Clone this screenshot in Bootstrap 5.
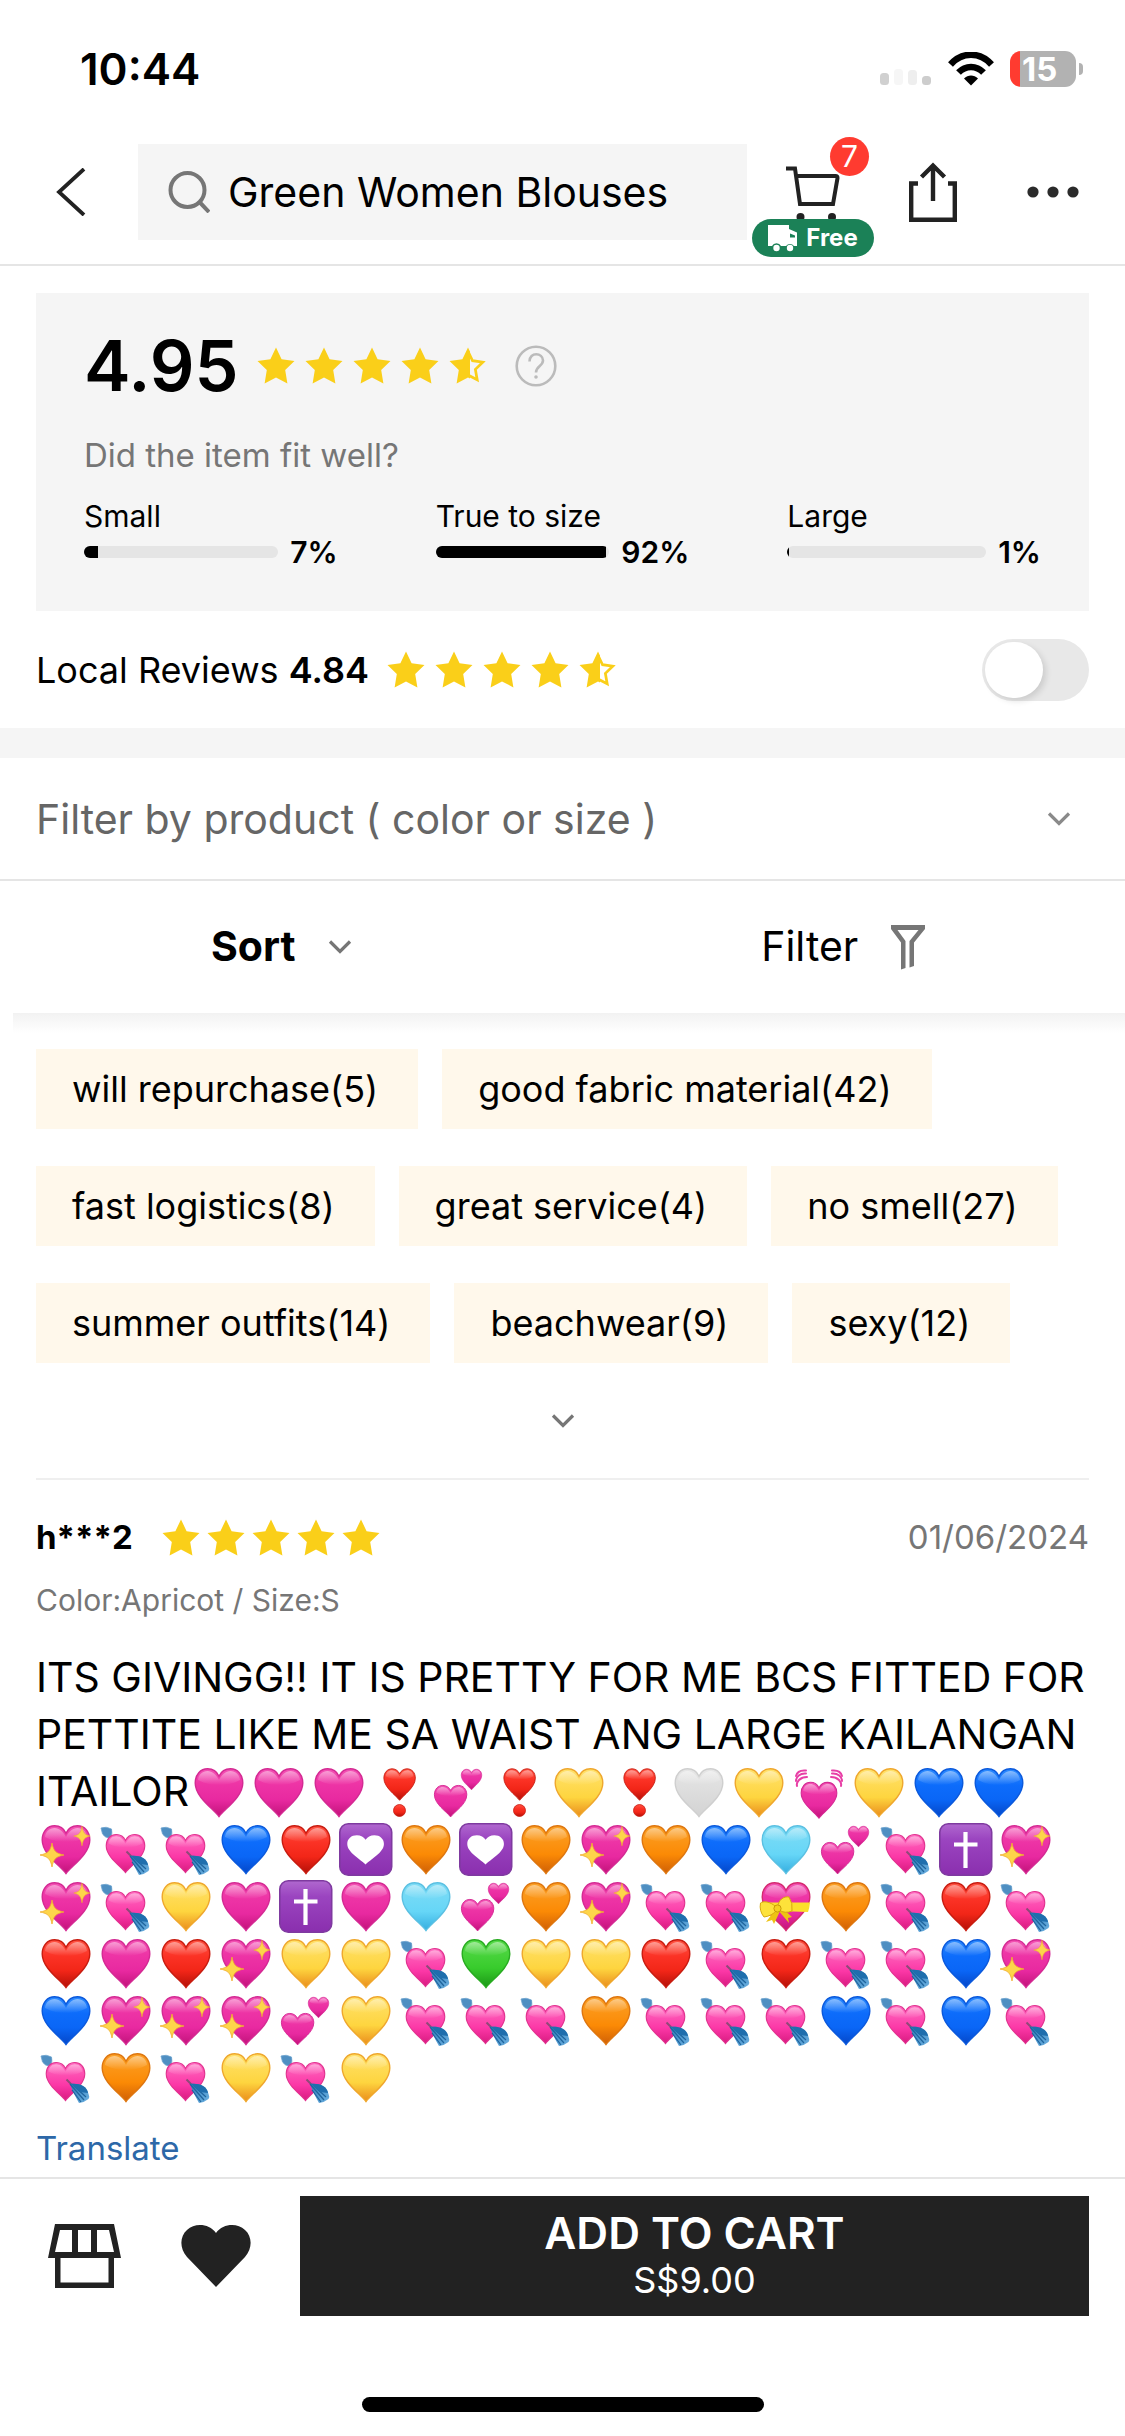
<!DOCTYPE html>
<html lang="en">
<head>
<meta charset="utf-8">
<meta name="viewport" content="width=device-width, initial-scale=1">
<title>Green Women Blouses – Reviews</title>
<link rel="stylesheet" href="https://cdn.jsdelivr.net/npm/bootstrap@5.3.0/dist/css/bootstrap.min.css">
<style>
  body { font-family: Inter, "Liberation Sans", sans-serif; color: #000; background: #fff; font-size: 36px; }
  svg { display: block; flex: none; }
  button { font-family: inherit; color: inherit; }
  .plain { border: 0; background: none; padding: 0; }
  .edge { padding-left: 36px; padding-right: 36px; }

  .status { padding: 45px 42px 27px 80px; }
  .clock { font-size: 44px; line-height: 48px; font-weight: 600; }
  .battery { width: 66px; height: 36px; border-radius: 11px; background: linear-gradient(90deg, #ff3b30 10px, #b2b2b2 10px); color: #fff; font-size: 33px; line-height: 36px; font-weight: 700; padding-left: 12px; }
  .battery-tip { width: 4px; height: 12px; border-radius: 0 6px 6px 0; background: #b2b2b2; margin-left: 3px; }

  .topbar { height: 146px; border-bottom: 2px solid #e5e5e5; padding-right: 6px; }
  .back { flex: none; width: 138px; padding-left: 56px; }
  .finder { min-width: 0; height: 96px; background: #f5f5f5; padding-left: 30px; }
  .finder input { width: 0; font-size: 41px; line-height: 48px; color: #000; margin-left: 18px; outline: 0; min-width: 0; }
  .act { flex: none; width: 132px; height: 144px; }
  .act-share { width: 108px; }
  .count { top: 17px; left: 83px; width: 39px; height: 39px; border-radius: 50%; background: #ff3b30; color: #fff; font-size: 30px; line-height: 39px; }
  .free { top: 99px; left: 5px; width: 122px; height: 38px; border-radius: 19px; background: #1b8157; color: #fff; font-size: 24px; line-height: 38px; font-weight: 700; }

  .summary { margin-top: 27px; background: #f5f5f5; padding: 37px 48px 41px; }
  .score { font-size: 70px; line-height: 72px; font-weight: 600; }
  .stars { gap: 10px; margin-left: 18px; }
  .fit-q { font-size: 33px; line-height: 40px; margin-top: 33px; color: #767676; }
  .fits { gap: 98px; margin-top: 23px; font-size: 30px; line-height: 36px; }
  .fits > div { flex: 1 1 0; }
  .fit-bar { height: 12px; border-radius: 6px; background: #e5e5e5; }
  .fit-bar .progress-bar { background: #000; }

  .local { height: 117px; }
  .switch { appearance: none; width: 107px; height: 62px; border-radius: 31px; background: #e8e8e8; margin: 0; }
  .switch::before { content: ""; display: block; width: 58px; height: 56px; margin: 3px; border-radius: 28px; background: #fff; box-shadow: 3px 3px 6px rgba(0,0,0,.12); }
  .switch:checked { background: #1b8157; }
  .switch:checked::before { margin-left: 46px; }

  .band { height: 30px; background: #f5f5f5; }
  .product { height: 123px; border-bottom: 2px solid #e5e5e5; }
  .product select { appearance: none; font-size: 41px; line-height: 60px; color: #666; }
  .product svg { right: 54px; pointer-events: none; }
  .sorting { height: 132px; font-size: 41px; }
  .sorting button { gap: 32px; }
  .shade { height: 20px; margin-left: 13px; background: linear-gradient(#f2f2f2, #fff); }

  .tags { padding-top: 16px; column-gap: 24px; row-gap: 37px; }
  .tags button { height: 80px; padding: 0 40px 0 36px; background: #fff8eb; font-size: 36px; }
  .more { height: 115px; }
  .review { margin: 0 36px; border-top: 2px solid #efefef; padding-top: 33px; }
  .who { height: 50px; font-size: 33px; }
  .who .stars { gap: 7px; margin-left: 29px; }
  .date, .variant { color: #767676; }
  .variant { font-size: 30px; line-height: 40px; margin-top: 17px; }
  .said { font-size: 41px; line-height: 57px; margin: 29px 0 23px; }
  .said svg { display: inline-block; width: 60px; height: 57px; vertical-align: bottom; }
  .translate { font-size: 33px; line-height: 40px; color: #2d68a8; }

  .buybar { border-top: 2px solid #e5e5e5; padding-top: 17px; padding-bottom: 24px; }
  .shop { padding-left: 12px; width: 145px; }
  .like { width: 119px; }
  .buy { height: 120px; background: #222; color: #fff; }
  .buy-main { font-size: 44px; line-height: 48px; font-weight: 600; }
  .buy-price { font-size: 36px; line-height: 46px; }
  .home { width: 402px; height: 15px; border-radius: 8px; background: #000; margin: 81px auto 0; }
</style>
<script src="https://cdn.jsdelivr.net/npm/bootstrap@5.3.0/dist/js/bootstrap.bundle.min.js"></script>
</head>
<body class="d-flex flex-column min-vh-100">

<svg width="0" height="0" class="position-absolute" aria-hidden="true">
  <defs>
    <linearGradient id="g-pink" x2="0" y2="1"><stop offset="0" stop-color="#f353b4"/><stop offset=".3" stop-color="#ee35a6"/><stop offset=".65" stop-color="#e829a0"/><stop offset="1" stop-color="#c2127a"/></linearGradient>
    <linearGradient id="g-red" x2="0" y2="1"><stop offset="0" stop-color="#ff5344"/><stop offset=".35" stop-color="#fb3225"/><stop offset=".65" stop-color="#f22618"/><stop offset="1" stop-color="#b41008"/></linearGradient>
    <linearGradient id="g-yellow" x2="0" y2="1"><stop offset="0" stop-color="#ffe16c"/><stop offset=".6" stop-color="#fed53f"/><stop offset="1" stop-color="#ea8d1c"/></linearGradient>
    <linearGradient id="g-orange" x2="0" y2="1"><stop offset="0" stop-color="#fba128"/><stop offset=".6" stop-color="#fb8a05"/><stop offset="1" stop-color="#cf5f06"/></linearGradient>
    <linearGradient id="g-blue" x2="0" y2="1"><stop offset="0" stop-color="#2c8bff"/><stop offset=".35" stop-color="#0d6cfb"/><stop offset=".65" stop-color="#0a66f6"/><stop offset="1" stop-color="#0446c8"/></linearGradient>
    <linearGradient id="g-sky" x2="0" y2="1"><stop offset="0" stop-color="#7fdcf5"/><stop offset=".6" stop-color="#66d6f7"/><stop offset="1" stop-color="#35aee0"/></linearGradient>
    <linearGradient id="g-green" x2="0" y2="1"><stop offset="0" stop-color="#57db4a"/><stop offset=".6" stop-color="#38cb2c"/><stop offset="1" stop-color="#1a9716"/></linearGradient>
    <linearGradient id="g-white" x2="0" y2="1"><stop offset="0" stop-color="#e6e6e6"/><stop offset="1" stop-color="#d3d3d3"/></linearGradient>
    <linearGradient id="g-hot" x2="0" y2="1"><stop offset="0" stop-color="#ff6cc0"/><stop offset=".6" stop-color="#fb37a6"/><stop offset="1" stop-color="#d81a80"/></linearGradient>
    <linearGradient id="g-violet" x2="0" y2="1"><stop offset="0" stop-color="#b068cf"/><stop offset=".3" stop-color="#9b45c0"/><stop offset="1" stop-color="#8a2fae"/></linearGradient>
    <linearGradient id="g-shine" x2="0" y2="1"><stop offset="0" stop-color="#fff" stop-opacity=".45"/><stop offset="1" stop-color="#fff" stop-opacity="0"/></linearGradient>
    <linearGradient id="g-feather" x2="1" y2="1"><stop offset="0" stop-color="#2d7fbd"/><stop offset="1" stop-color="#6fb1e0"/></linearGradient>
    <clipPath id="left-half"><path d="M0 0H20V36H0Z"/></clipPath>
    <path id="heart-line" d="M30 53.500C24 45.500 6.200 34 6.200 20C6.200 11.500 11.500 5.800 18.600 5.800C23.600 5.800 28 8.800 30 13.200C32 8.800 36.400 5.800 41.400 5.800C48.500 5.800 53.800 11.500 53.800 20C53.800 34 36 45.500 30 53.500Z"/>
    <g id="heart"><use href="#heart-line" stroke-width="1.400"/><path d="M9 17C9.500 11.500 13.500 8 18.500 8C23.500 8 27 11.500 30 17C33 11.500 36.500 8 41.500 8C46.500 8 50.500 11.500 51 17C44 21 36 22 30 22C24 22 16 21 9 17Z" fill="url(#g-shine)" stroke="none"/></g>
    <path id="glint" d="M0-12C1.500-4 4-1.500 12 0C4 1.500 1.500 4 0 12C-1.500 4-4 1.500-12 0C-4-1.500-1.500-4 0-12Z" fill="#fdd54a" stroke="#f0ad2c" stroke-width=".8"/>
    <path id="star" d="M18 0.500L23.300 11.500L35.500 13.200L26.700 21.700L28.800 34.500L18 28.800L7.200 34.500L9.300 21.700L.5 13.200L12.700 11.500Z"/>
  </defs>
  <symbol id="e-pink" viewBox="0 0 60 57"><use href="#heart" fill="url(#g-pink)" stroke="#d42a93"/></symbol>
  <symbol id="e-red" viewBox="0 0 60 57"><use href="#heart" fill="url(#g-red)" stroke="#c81c10"/></symbol>
  <symbol id="e-yellow" viewBox="0 0 60 57"><use href="#heart" fill="url(#g-yellow)" stroke="#efa72d"/></symbol>
  <symbol id="e-orange" viewBox="0 0 60 57"><use href="#heart" fill="url(#g-orange)" stroke="#de760f"/></symbol>
  <symbol id="e-blue" viewBox="0 0 60 57"><use href="#heart" fill="url(#g-blue)" stroke="#0b59dc"/></symbol>
  <symbol id="e-sky" viewBox="0 0 60 57"><use href="#heart" fill="url(#g-sky)" stroke="#5bc0e2"/></symbol>
  <symbol id="e-green" viewBox="0 0 60 57"><use href="#heart" fill="url(#g-green)" stroke="#28ab20"/></symbol>
  <symbol id="e-white" viewBox="0 0 60 57"><use href="#heart" fill="url(#g-white)" stroke="#cfcfcf"/></symbol>
  <symbol id="e-sparkle" viewBox="0 0 60 57"><use href="#heart" fill="url(#g-pink)" stroke="#d42a93"/><use href="#glint" transform="translate(16 35)"/><use href="#glint" transform="translate(46 16) scale(.68 .82)"/></symbol>
  <symbol id="e-two" viewBox="0 0 60 57"><use href="#heart" fill="url(#g-pink)" stroke="#d42a93" transform="translate(1.200 18.600) scale(.68 .66)"/><use href="#heart" fill="url(#g-pink)" stroke="#d42a93" transform="translate(29.600 3.800) scale(.43)"/></symbol>
  <symbol id="e-bang" viewBox="0 0 60 57"><use href="#heart" fill="url(#g-red)" stroke="#c81c10" transform="translate(10.800 2) scale(.66)"/><circle cx="30.500" cy="47.500" r="6" fill="url(#g-red)" stroke="#c81c10" stroke-width=".8"/></symbol>
  <symbol id="e-beat" viewBox="0 0 60 57"><use href="#heart" fill="url(#g-pink)" stroke="#d42a93" transform="translate(7.500 15) scale(.75)"/><g fill="none" stroke="#e83fa6" stroke-width="2" stroke-linecap="round"><path d="M8 23C7 19 11 14 18 14"/><path d="M7 18C7 14 11 10 17 10.500"/><path d="M7 13C8 9 12 7 17 7.500"/><path d="M52 23C53 19 49 14 42 14"/><path d="M53 18C53 14 49 10 43 10.500"/><path d="M53 13C52 9 48 7 43 7.500"/></g></symbol>
  <symbol id="e-arrow" viewBox="0 0 60 57"><path d="M12 12L18 20" stroke="#7c8794" stroke-width="1.500"/><path d="M5 8Q10 6 15.500 9Q17 13 14 18Q9 18 6.500 14Z" fill="#4f8fc2" stroke="#6ea5cf" stroke-width=".8"/><use href="#heart" fill="url(#g-hot)" stroke="#e1338f" transform="translate(5.200 9.800) scale(.81 .8)"/><path d="M30.500 31.500L46 47" stroke="#8d4a78" stroke-width="2"/><path d="M34 36C42 35 51 38 52.500 46Q54 49 52.500 51Q49 54 43 55Q38 47 34 36Z" fill="url(#g-feather)"/><path d="M34 36L48 52M38 38L50 49M36 42L45 54" stroke="#1f649c" stroke-width="1.200" fill="none"/><path d="M35 36C43 35 51 38 52 45L44 44Z" fill="#1f6ead"/></symbol>
  <symbol id="e-deco" viewBox="0 0 60 57"><rect x="3.800" y="3.800" width="51.900" height="51.400" rx="8.500" fill="url(#g-violet)" stroke="#7f3aa0" stroke-width="1.600"/><use href="#heart-line" fill="#fff" transform="translate(6.500 11.800) scale(.77 .61)"/></symbol>
  <symbol id="e-cross" viewBox="0 0 60 57"><rect x="3.800" y="3.800" width="51.900" height="51.400" rx="8.500" fill="url(#g-violet)" stroke="#7f3aa0" stroke-width="1.600"/><path d="M29.500 12V48M18 24.500H41.500" stroke="#fff" stroke-width="4.200"/></symbol>
  <symbol id="e-gift" viewBox="0 0 60 57"><use href="#heart" fill="url(#g-pink)" stroke="#d42a6f"/><path d="M6.500 25.500H54Q53.500 31 52 35L8 33.500Z" fill="#fbe02c"/><path d="M19 33L10 45L16 43L18 47L24 34Z" fill="#eec313"/><path d="M22 33L33 46L32 41L36 40L26 31Z" fill="#eec313"/><path d="M20 30C14 24 7 24 4.500 26Q3 34 8 40Q16 39 21 33Z" fill="#fde23a" stroke="#d7a90d" stroke-width="1"/><path d="M22 30C22 23 28 19 33 20Q37 26 36 34Q29 37 23 33Z" fill="#fde23a" stroke="#d7a90d" stroke-width="1"/><circle cx="21.500" cy="31.500" r="3.600" fill="#f6d120" stroke="#c99a08" stroke-width="1"/></symbol>
  <symbol id="s-full" viewBox="0 0 36 36"><use href="#star" fill="#facf19"/></symbol>
  <symbol id="s-half" viewBox="0 0 36 36"><use href="#star" fill="#facf19" clip-path="url(#left-half)"/><path d="M18 4L22.300 13L32 14.400L25 21.200L26.700 31L18 26.500" fill="none" stroke="#facf19" stroke-width="2.600"/></symbol>
  <symbol id="chev" viewBox="0 0 24 16"><path d="M2 2.500L12 12.500L22 2.500" fill="none" stroke="currentColor" stroke-width="3.200"/></symbol>
</svg>

<header>
  <div class="status d-flex align-items-center">
    <span class="clock me-auto">10:44</span>
    <svg width="52" height="34" viewBox="0 0 52 34"><rect y="21" width="9" height="12" rx="3.500" fill="#d0d0d0"/><rect x="14" y="17" width="9" height="16" rx="3.500" fill="#f6f6f6"/><rect x="28" y="18" width="9" height="15" rx="3.500" fill="#eee"/><rect x="42" y="24" width="9" height="9" rx="3.500" fill="#cdcdcd"/></svg>
    <svg class="ms-3 me-3" width="46" height="34" viewBox="0 0 46 34" fill="none" stroke="#000" stroke-width="6.500"><path d="M2.500 12.500C14-.500 32-.500 43.500 12.500"/><path d="M10.500 20.500C17.500 13 28.500 13 35.500 20.500"/><path d="M23 33.500L16 26.500C20 22.500 26 22.500 30 26.500Z" fill="#000" stroke="none"/></svg>
    <span class="battery">15</span><span class="battery-tip"></span>
  </div>
  <nav class="topbar d-flex align-items-center" aria-label="Main">
    <button class="plain back" type="button" aria-label="Back"><svg width="30" height="48" viewBox="0 0 30 48"><path d="M28 1L3 24L28 47" fill="none" stroke="#222" stroke-width="3.800"/></svg></button>
    <div class="finder d-flex align-items-center flex-grow-1">
      <svg width="42" height="42" viewBox="0 0 42 42" fill="none" stroke="#767676" stroke-width="4"><circle cx="19.500" cy="19" r="17"/><path d="M31 30.500L41 41"/></svg>
      <input class="plain flex-grow-1" type="text" value="Green Women Blouses" aria-label="Search">
    </div>
    <button class="plain act position-relative d-flex align-items-center justify-content-center" type="button" aria-label="Cart">
      <svg width="60" height="60" viewBox="0 0 60 60"><path d="M3 6.500H12L17 42H50L54.500 16Q54.500 14 52.500 14H13" fill="none" stroke="#222" stroke-width="4"/><circle cx="17.500" cy="55" r="4" fill="#222"/><circle cx="49" cy="55" r="4" fill="#222"/></svg>
      <span class="count position-absolute text-center">7</span>
      <span class="free position-absolute d-flex align-items-center justify-content-center gap-2"><svg width="30" height="28" viewBox="0 0 30 28"><path d="M0 1H21V5L29 8.500V22H26A5 5 0 0 0 18 22H13A5 5 0 0 0 4 22H0Z" fill="#fff"/><path d="M22 9.500L27 11.500V13.500H22Z" fill="#1b8157"/><circle cx="8.500" cy="24" r="3.200" fill="#fff"/><circle cx="22" cy="24" r="3.200" fill="#fff"/></svg>Free</span>
    </button>
    <button class="plain act act-share d-flex align-items-center justify-content-center" type="button" aria-label="Share"><svg width="48" height="60" viewBox="0 0 48 60" fill="none" stroke="#222" stroke-width="4.400"><path d="M9 21.500H2.200V57.800H45.800V21.500H39"/><path d="M24 39V3M12.500 15L24 3.500L35.500 15"/></svg></button>
    <button class="plain act d-flex align-items-center justify-content-center" type="button" aria-label="More"><svg width="52" height="12" viewBox="0 0 52 12" fill="#2b2b2b"><circle cx="6" cy="6" r="5.600"/><circle cx="26" cy="6" r="5.600"/><circle cx="46" cy="6" r="5.600"/></svg></button>
  </nav>
</header>

<main>
  <section class="edge">
    <div class="summary">
      <div class="d-flex align-items-center">
        <span class="score">4.95</span>
        <div class="stars d-flex" role="img" aria-label="Rating">
          <svg width="38" height="38"><use href="#s-full"/></svg><svg width="38" height="38"><use href="#s-full"/></svg><svg width="38" height="38"><use href="#s-full"/></svg><svg width="38" height="38"><use href="#s-full"/></svg><svg width="38" height="38"><use href="#s-half"/></svg>
        </div>
        <button class="plain ms-4 ps-1" type="button" aria-label="About ratings"><svg width="42" height="42" viewBox="0 0 42 42" fill="none" stroke="#bbb" stroke-width="2.600"><circle cx="21" cy="21" r="19.300"/><path d="M14.500 16.500C14.500 6.500 28 7.500 28 15.500C28 21 21 21 21 27.500"/><circle cx="21" cy="32" r="1" fill="#bbb" stroke-width="1.600"/></svg></button>
      </div>
      <p class="fit-q mb-0">Did the item fit well?</p>
      <div class="fits d-flex">
        <div><div>Small</div><div class="d-flex align-items-center gap-2"><div class="progress fit-bar flex-grow-1 me-1"><div class="progress-bar" style="width:7%"></div></div><span class="fw-semibold">7%</span></div></div>
        <div><div>True to size</div><div class="d-flex align-items-center gap-2"><div class="progress fit-bar flex-grow-1 me-1"><div class="progress-bar" style="width:98%"></div></div><span class="fw-semibold">92%</span></div></div>
        <div><div>Large</div><div class="d-flex align-items-center gap-2"><div class="progress fit-bar flex-grow-1 me-1"><div class="progress-bar" style="width:1%"></div></div><span class="fw-semibold">1%</span></div></div>
      </div>
    </div>
    <div class="local d-flex align-items-center">
      <label for="localOnly">Local Reviews <span class="fw-semibold">4.84</span></label>
      <div class="stars d-flex me-auto" role="img" aria-label="Local rating">
        <svg width="38" height="38"><use href="#s-full"/></svg><svg width="38" height="38"><use href="#s-full"/></svg><svg width="38" height="38"><use href="#s-full"/></svg><svg width="38" height="38"><use href="#s-full"/></svg><svg width="38" height="38"><use href="#s-half"/></svg>
      </div>
      <input class="switch" type="checkbox" role="switch" id="localOnly">
    </div>
  </section>

  <div class="band"></div>

  <div class="product edge position-relative d-flex align-items-center">
    <select class="plain w-100" aria-label="Filter by product"><option>Filter by product ( color or size )</option></select>
    <svg class="position-absolute" width="24" height="16" color="#8a8a8a"><use href="#chev"/></svg>
  </div>
  <div class="sorting row g-0">
    <button class="plain col-6 d-flex align-items-center justify-content-center fw-bold" type="button">Sort<svg width="24" height="16" color="#767676"><use href="#chev"/></svg></button>
    <button class="plain col-6 d-flex align-items-center justify-content-center" type="button">Filter<svg width="36" height="46" viewBox="0 0 36 46"><path d="M1 1H35V5L24 18.500V42L19.500 43.500V17L28.500 6H7.500L15.500 17V44L11 45.500V18.500L1 5Z" fill="#767676"/></svg></button>
  </div>
  <div class="shade"></div>

  <section class="edge">
    <div class="tags d-flex flex-wrap">
      <button class="plain" type="button">will repurchase(5)</button>
      <button class="plain" type="button">good fabric material(42)</button>
      <button class="plain" type="button">fast logistics(8)</button>
      <button class="plain" type="button">great service(4)</button>
      <button class="plain" type="button">no smell(27)</button>
      <button class="plain" type="button">summer outfits(14)</button>
      <button class="plain" type="button">beachwear(9)</button>
      <button class="plain" type="button">sexy(12)</button>
    </div>
    <button class="plain more w-100 d-flex align-items-center justify-content-center" type="button" aria-label="Show more tags"><svg width="24" height="16" color="#767676"><use href="#chev"/></svg></button>
  </section>

  <article class="review">
    <div class="who d-flex align-items-center">
      <span class="fw-bold">h***2</span>
      <div class="stars d-flex me-auto" role="img" aria-label="5 stars">
        <svg width="38" height="38"><use href="#s-full"/></svg><svg width="38" height="38"><use href="#s-full"/></svg><svg width="38" height="38"><use href="#s-full"/></svg><svg width="38" height="38"><use href="#s-full"/></svg><svg width="38" height="38"><use href="#s-full"/></svg>
      </div>
      <time class="date" datetime="2024-06-01">01/06/2024</time>
    </div>
    <p class="variant mb-0">Color:Apricot / Size:S</p>
    <p class="said">ITS GIVINGG!! IT IS PRETTY FOR ME BCS FITTED FOR PETTITE LIKE ME SA WAIST ANG LARGE KAILANGAN ITAILOR<span data-emoji="p p p ! 2 ! y ! w y v y b b"></span><br><span data-emoji="s a a b r d o d o s o b k 2 a c s s a y p c p k 2 o s a a t o a r a r p r s y y a g y y r a r a a b s b s s s 2 y a a a o a a a b a b a a o a y a y"></span></p>
    <a class="translate text-decoration-none d-block" href="#">Translate</a>
  </article>
</main>

<footer class="buybar mt-auto">
  <div class="edge d-flex align-items-center">
    <button class="plain shop" type="button" aria-label="Store"><svg width="73" height="64" viewBox="0 0 73 64"><path fill="#222" fill-rule="evenodd" d="M7 0H66L73 34H66V64H7V34H0ZM12 6L7 28H24V6ZM30 6V28H43V6ZM49 6V28H66L61 6ZM12.500 34V58.500H60.500V34Z"/></svg></button>
    <button class="plain like" type="button" aria-label="Like"><svg width="70" height="62" viewBox="0 0 70 62"><path d="M35 62L6 32C-2 23-1 11 6 5C14-2.500 28-1.500 35 8C42-1.500 56-2.500 64 5C71 11 72 23 64 32Z" fill="#222"/></svg></button>
    <button class="plain buy flex-grow-1 d-flex flex-column align-items-center justify-content-center" type="button"><span class="buy-main">ADD TO CART</span><span class="buy-price">S$9.00</span></button>
  </div>
  <div class="home"></div>
</footer>

<script>
  // Expands each emoji code into its drawing.
  const EMOJI = {
    p: ['pink', '🩷'], '!': ['bang', '❣️'], 2: ['two', '💕'], y: ['yellow', '💛'], w: ['white', '🤍'],
    v: ['beat', '💓'], b: ['blue', '💙'], s: ['sparkle', '💖'], a: ['arrow', '💘'], r: ['red', '❤️'],
    d: ['deco', '💟'], o: ['orange', '🧡'], k: ['sky', '🩵'], c: ['cross', '✝️'], t: ['gift', '💝'], g: ['green', '💚']
  };
  document.querySelectorAll('[data-emoji]').forEach(el => {
    el.innerHTML = el.dataset.emoji.split(' ').map(k =>
      `<svg role="img" aria-label="${EMOJI[k][1]}"><use href="#e-${EMOJI[k][0]}"/></svg>`).join('');
  });
</script>
</body>
</html>
